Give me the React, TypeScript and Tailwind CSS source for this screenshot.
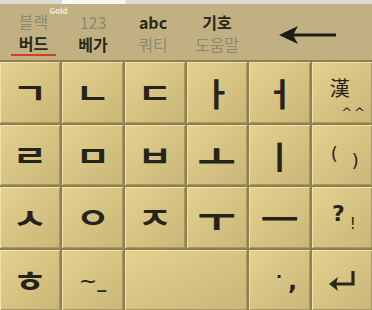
import React from 'react';

const KEY =
  'flex items-center justify-center relative bg-gradient-to-br from-[#e4d291] to-[#cab676] shadow-[inset_1px_1px_0_#efe2a8,inset_-1px_-1px_0_#a8975f] text-[#26241a]';

// consonants are drawn wider than the font gives them
const cons = "font-['Noto_Sans_CJK_KR',sans-serif] font-bold text-[28px] leading-none scale-x-[1.35]";
const vowel = "font-['Noto_Sans_CJK_KR',sans-serif] font-bold text-[32px] leading-none";

const EnterIcon = () => (
  <svg width="30" height="22" viewBox="0 0 30 22">
    <path d="M26 2 V15 H9" fill="none" stroke="#2a281d" strokeWidth="3.2" />
    <path d="M2 15 L11 8 L9 15 L11 22 Z" fill="#2a281d" />
  </svg>
);

const BackArrow = () => (
  <svg width="60" height="22" viewBox="0 0 60 22">
    <path d="M14 11 H58" stroke="#1e1c14" strokeWidth="3" />
    <path d="M1 11 L20 2 L15 11 L20 20 Z" fill="#1e1c14" />
  </svg>
);

const TopItem = ({ top, bottom, topDark, sup, underline }: { top: string; bottom: string; topDark?: boolean; sup?: string; underline?: boolean }) => (
  <div className="flex flex-col items-center font-['Noto_Sans_CJK_KR',sans-serif] text-[16px] leading-[22px]">
    <span className={(topDark ? 'text-[#2a2819] font-bold' : 'text-[#8c8a6e]') + ' relative'}>
      {top}
      {sup && <span className="absolute left-full ml-[1px] -top-[3px] text-[8px] leading-none text-[#f4ecd2] font-bold">{sup}</span>}
    </span>
    <span className={(topDark ? 'text-[#8c8a6e]' : 'text-[#2a2819] font-bold') + (underline ? ' border-b-2 border-[#d83a22] px-[8px]' : '')}>
      {bottom}
    </span>
  </div>
);

export default function App() {
  return (
    <div className="w-[372px] h-[310px] overflow-hidden bg-[#8e8050]">
      {/* mode bar */}
      <div className="h-[61px] bg-[#c1b182] border-b border-[#8e8050]">
        <div className="h-[4px] bg-[#dedbd0] flex">
          <div className="ml-[62px] w-[63px] bg-[#f7f7f5]" />
        </div>
        <div className="flex items-center h-[56px] pt-[2px]">
          <div className="w-[64px] pl-[3px]">
            <TopItem top="블랙" sup="Gold" bottom="버드" underline />
          </div>
          <div className="w-[58px] flex justify-center">
            <TopItem top="123" bottom="베가" />
          </div>
          <div className="w-[62px] flex justify-center">
            <TopItem top="abc" bottom="쿼티" topDark />
          </div>
          <div className="w-[66px] flex justify-center">
            <TopItem top="기호" bottom="도움말" topDark />
          </div>
          <div className="flex-1 flex justify-center pr-[6px] pt-[4px]">
            <BackArrow />
          </div>
        </div>
      </div>

      {/* keys */}
      <div className="grid grid-cols-6 grid-rows-4 gap-[2px] pt-[1px] h-[249px]">
        <div className={KEY}><span className={cons}>ㄱ</span></div>
        <div className={KEY}><span className={cons}>ㄴ</span></div>
        <div className={KEY}><span className={cons}>ㄷ</span></div>
        <div className={KEY}><span className={vowel}>ㅏ</span></div>
        <div className={KEY}><span className={vowel}>ㅓ</span></div>
        <div className={KEY}>
          <span className="font-['Noto_Sans_CJK_KR',serif] text-[20px] leading-none -mt-[8px] -ml-[4px]">漢</span>
          <span className="absolute right-[5px] bottom-[4px] font-['DejaVu_Sans',sans-serif] text-[13px] leading-none tracking-[2px]">^^</span>
        </div>

        <div className={KEY}><span className={cons}>ㄹ</span></div>
        <div className={KEY}><span className={cons}>ㅁ</span></div>
        <div className={KEY}><span className={cons}>ㅂ</span></div>
        <div className={KEY}><span className={vowel + ' scale-x-[1.3]'}>ㅗ</span></div>
        <div className={KEY}><span className={vowel}>ㅣ</span></div>
        <div className={KEY}>
          <span className="font-['DejaVu_Sans',sans-serif] text-[18px] leading-none -mt-[2px] ml-[6px]">(</span>
          <span className="font-['DejaVu_Sans',sans-serif] text-[18px] leading-none ml-[14px] mt-[12px]">)</span>
        </div>

        <div className={KEY}><span className={cons}>ㅅ</span></div>
        <div className={KEY}><span className={cons}>ㅇ</span></div>
        <div className={KEY}><span className={cons}>ㅈ</span></div>
        <div className={KEY}><span className={vowel + ' scale-x-[1.3]'}>ㅜ</span></div>
        <div className={KEY}><span className={vowel + ' scale-x-[1.3]'}>ㅡ</span></div>
        <div className={KEY}>
          <span className="font-['DejaVu_Sans',sans-serif] font-bold text-[22px] leading-none -mt-[6px] ml-[4px]">?</span>
          <span className="font-['DejaVu_Sans',sans-serif] text-[15px] leading-none ml-[5px] mt-[14px]">!</span>
        </div>

        <div className={KEY}><span className={cons}>ㅎ</span></div>
        <div className={KEY}>
          <span className="font-['DejaVu_Sans',sans-serif] text-[22px] leading-none mt-[2px]">~</span>
          <span className="font-['DejaVu_Sans',sans-serif] font-bold text-[18px] leading-none mt-[4px]">_</span>
        </div>
        <div className={KEY + ' col-span-2'} />
        <div className={KEY}>
          <span className="font-['DejaVu_Sans',sans-serif] font-bold text-[16px] leading-none mt-[-6px] ml-[14px]">·</span>
          <span className="font-['DejaVu_Sans',sans-serif] font-bold text-[24px] leading-none ml-[6px] mt-[2px]">,</span>
        </div>
        <div className={KEY}><EnterIcon /></div>
      </div>
    </div>
  );
}
